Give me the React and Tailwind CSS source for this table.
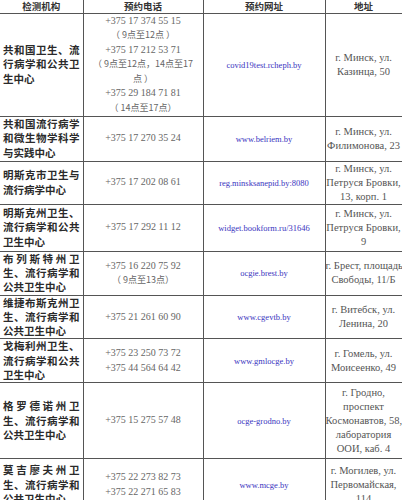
import React from 'react';

const rows = [
  {
    h: 'h-[103px]',
    org: '共和国卫生、流行病学和公共卫生中心',
    phones: [
      '+375 17 374 55 15',
      { cn: '（ 9点至12点 ）' },
      '+375 17 212 53 71',
      { cn: '（ 9点至12点，14点至17' },
      { cn: '点 ）' },
      '+375 29 184 71 81',
      { cn: '（ 14点至17点）' },
    ],
    top: true,
    url: 'covid19test.rcheph.by',
    addr: ['г. Минск, ул.', 'Казинца, 50'],
  },
  {
    h: 'h-[45px]',
    org: '共和国流行病学和微生物学科学与实践中心',
    phones: ['+375 17 270 35 24'],
    url: 'www.belriem.by',
    addr: ['г. Минск, ул.', 'Филимонова, 23'],
  },
  {
    h: 'h-[43px]',
    org: '明斯克市卫生与流行病学中心',
    phones: ['+375 17 202 08 61'],
    url: 'reg.minsksanepid.by:8080',
    addr: ['г. Минск, ул.', 'Петруся Бровки,', '13, корп. 1'],
  },
  {
    h: 'h-[47px]',
    org: '明斯克州卫生、流行病学和公共卫生中心',
    phones: ['+375 17 292 11 12'],
    url: 'widget.bookform.ru/31646',
    addr: ['г. Минск, ул.', 'Петруся Бровки,', '9'],
  },
  {
    h: 'h-[44px]',
    org: '布列斯特州卫生、流行病学和公共卫生中心',
    phones: ['+375 16 220 75 92', { cn: '（ 9点至13点）' }],
    url: 'ocgie.brest.by',
    addr: ['г. Брест, площадь', 'Свободы, 11/Б'],
  },
  {
    h: 'h-[43px]',
    org: '维捷布斯克州卫生、流行病学和公共卫生中心',
    phones: ['+375 21 261 60 90'],
    url: 'www.cgevtb.by',
    addr: ['г. Витебск, ул.', 'Ленина, 20'],
  },
  {
    h: 'h-[44px]',
    org: '戈梅利州卫生、流行病学和公共卫生中心',
    phones: ['+375 23 250 73 72', '+375 44 564 64 42'],
    url: 'www.gmlocge.by',
    addr: ['г. Гомель, ул.', 'Моисеенко, 49'],
  },
  {
    h: 'h-[76px]',
    org: '格罗德诺州卫生、流行病学和公共卫生中心',
    phones: ['+375 15 275 57 48'],
    url: 'ocge-grodno.by',
    addr: ['г. Гродно,', 'проспект', 'Космонавтов, 58,', 'лаборатория', 'ООИ, каб. 4'],
  },
  {
    h: 'h-[52px]',
    org: '莫吉廖夫州卫生、流行病学和公共卫生中心',
    phones: ['+375 22 273 82 73', '+375 22 271 65 83'],
    url: 'www.mcge.by',
    addr: ['г. Могилев, ул.', 'Первомайская,', '114'],
  },
];

export default function App() {
  return (
    <div className="w-[402px] bg-white overflow-hidden">
      <table className="w-[402px] table-fixed border-collapse">
        <colgroup>
          <col className="w-[83px]" />
          <col className="w-[120px]" />
          <col className="w-[122px]" />
          <col className="w-[77px]" />
        </colgroup>
        <thead>
          <tr className="h-[13px] font-['Noto_Sans_CJK_SC',sans-serif] text-[9.5px] font-bold leading-[12px] text-[#333]">
            <th className="border-r border-b border-[#555] p-0 text-center">检测机构</th>
            <th className="border-r border-b border-[#555] p-0 text-center">预约电话</th>
            <th className="border-r border-b border-[#555] p-0 text-center">预约网址</th>
            <th className="border-r border-b border-[#555] p-0 text-center">地址</th>
          </tr>
        </thead>
        <tbody>
          {rows.map((r, i) => (
            <tr key={i} className={r.h}>
              <td className="border-r border-b border-[#555] pl-[3px] pr-[3px] py-0 align-middle text-justify font-['Noto_Sans_CJK_SC',sans-serif] text-[10.5px] font-bold leading-[14.2px] text-[#2a2a2a]">
                {r.org}
              </td>
              <td
                className={
                  'border-r border-b border-[#555] p-0 text-center font-["Liberation_Serif","Noto_Sans_CJK_SC",serif] text-[10px] leading-[14.5px] text-[#666] ' +
                  (r.top ? 'align-top' : 'align-middle')
                }
              >
                {r.phones.map((p, j) =>
                  typeof p === 'string' ? (
                    <div key={j} className="whitespace-nowrap">{p}</div>
                  ) : (
                    <div key={j} className="whitespace-nowrap font-['Noto_Sans_CJK_SC',sans-serif] text-[9px]">{p.cn}</div>
                  )
                )}
              </td>
              <td className="border-r border-b border-[#555] p-0 text-center align-middle font-['Liberation_Serif',serif] text-[8.5px] leading-[12px] text-[#3a34c0] whitespace-nowrap">
                {r.url}
              </td>
              <td className="border-r border-b border-[#555] p-0 text-center align-middle font-['Liberation_Serif',serif] text-[10.5px] leading-[14px] text-[#555]">
                {r.addr.map((a, j) => (
                  <div key={j} className="whitespace-nowrap">{a}</div>
                ))}
              </td>
            </tr>
          ))}
        </tbody>
      </table>
    </div>
  );
}
